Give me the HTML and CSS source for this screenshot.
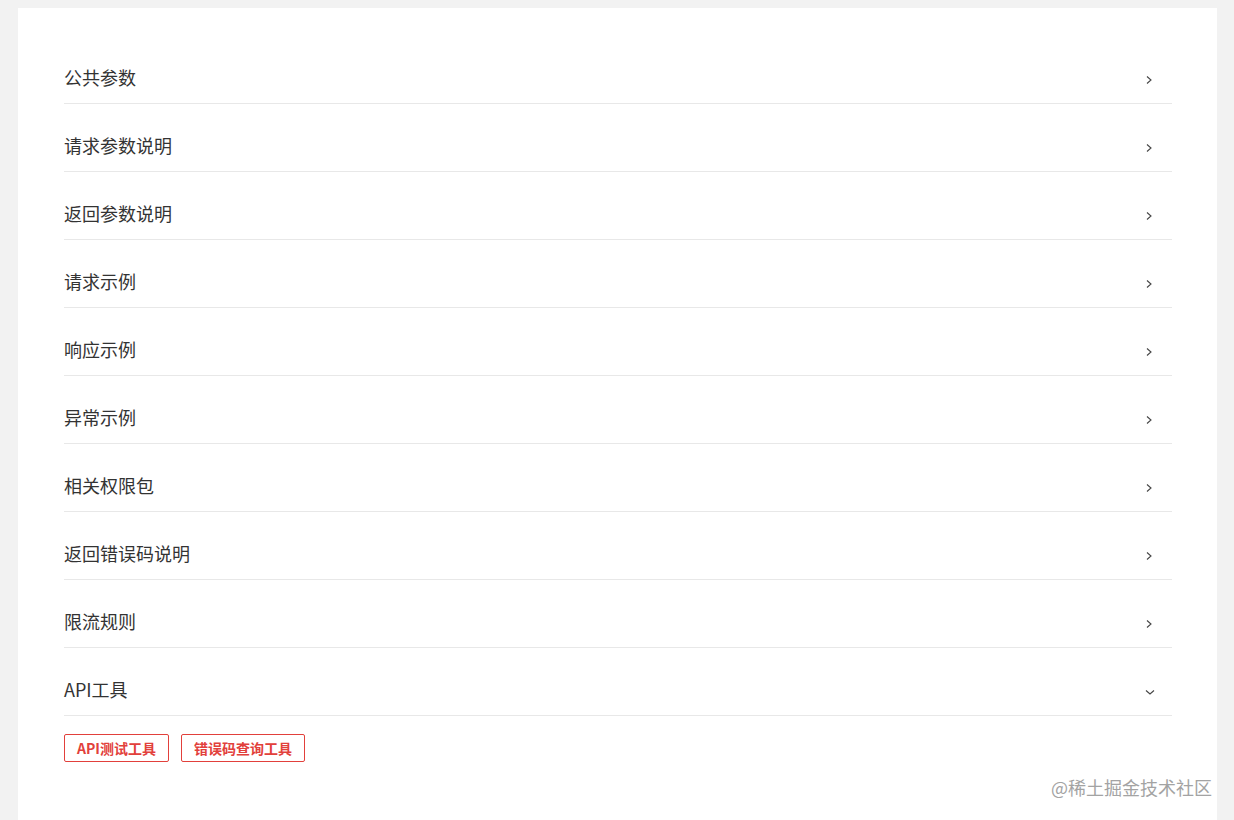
FILE: index.html
```html
<!DOCTYPE html>
<html lang="zh">
<head>
<meta charset="utf-8">
<link rel="stylesheet" href="styles.css">
</head>
<body>
<div class="panel">
  <div class="row"><span>公共参数</span><svg class="chev" viewBox="0 0 10 10"><path d="M3 1.5 L7 5 L3 8.5"/></svg></div>
  <div class="row"><span>请求参数说明</span><svg class="chev" viewBox="0 0 10 10"><path d="M3 1.5 L7 5 L3 8.5"/></svg></div>
  <div class="row"><span>返回参数说明</span><svg class="chev" viewBox="0 0 10 10"><path d="M3 1.5 L7 5 L3 8.5"/></svg></div>
  <div class="row"><span>请求示例</span><svg class="chev" viewBox="0 0 10 10"><path d="M3 1.5 L7 5 L3 8.5"/></svg></div>
  <div class="row"><span>响应示例</span><svg class="chev" viewBox="0 0 10 10"><path d="M3 1.5 L7 5 L3 8.5"/></svg></div>
  <div class="row"><span>异常示例</span><svg class="chev" viewBox="0 0 10 10"><path d="M3 1.5 L7 5 L3 8.5"/></svg></div>
  <div class="row"><span>相关权限包</span><svg class="chev" viewBox="0 0 10 10"><path d="M3 1.5 L7 5 L3 8.5"/></svg></div>
  <div class="row"><span>返回错误码说明</span><svg class="chev" viewBox="0 0 10 10"><path d="M3 1.5 L7 5 L3 8.5"/></svg></div>
  <div class="row"><span>限流规则</span><svg class="chev" viewBox="0 0 10 10"><path d="M3 1.5 L7 5 L3 8.5"/></svg></div>
  <div class="row"><span>API工具</span><svg class="chev down" viewBox="0 0 10 10"><path d="M1 3.5 L5 7 L9 3.5"/></svg></div>
  <div class="tools">
    <a class="tool">API测试工具</a>
    <a class="tool">错误码查询工具</a>
  </div>
</div>
<div class="watermark">@稀土掘金技术社区</div>
</body>
</html>
```

FILE: styles.css
```css
html, body {
  margin: 0;
  padding: 0;
  background: #f2f2f2;
  height: 820px;
  overflow: hidden;
}
body {
  padding: 8px 17px 0 18px;
  box-sizing: border-box;
  font-family: "Noto Sans CJK SC", "Noto Sans", sans-serif;
  color: #333;
}
.panel {
  background: #fff;
  height: 812px;
  padding: 28px 45px 0 46px;
  box-sizing: border-box;
}
.row {
  display: flex;
  align-items: center;
  justify-content: space-between;
  padding: 31px 0 12px;
  line-height: 24px;
  height: 24px;
  border-bottom: 1px solid #e8e8e8;
  font-size: 18px;
}
.row span {
  position: relative;
  top: -2px;
}
.chev {
  width: 10px;
  height: 10px;
  margin-right: 18px;
  margin-top: 2px;
  fill: none;
  stroke: #444;
  stroke-width: 1.1;
}
.chev.down {
  margin-right: 17px;
}
.tools {
  display: flex;
  gap: 12px;
  margin-top: 18px;
}
.tool {
  display: inline-block;
  height: 26px;
  line-height: 26px;
  padding: 0 12px;
  border: 1px solid #e2403b;
  border-radius: 2px;
  color: #e2403b;
  font-size: 14px;
  font-weight: bold;
}
.watermark {
  position: absolute;
  left: 1051px;
  top: 774px;
  font-size: 18px;
  color: #a3a3a3;
}
```
